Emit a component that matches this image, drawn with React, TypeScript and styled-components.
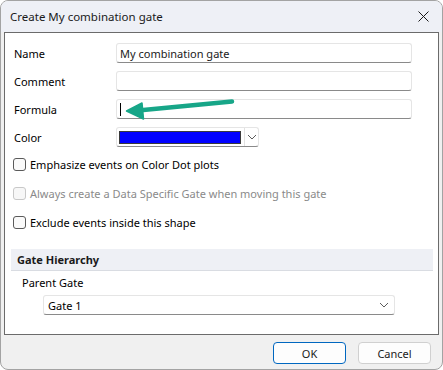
import styled, { createGlobalStyle } from 'styled-components';

const GlobalStyle = createGlobalStyle`
  html, body {
    margin: 0;
    padding: 0;
    background: #ffffff;
  }
  * {
    box-sizing: border-box;
  }
`;

const FONT = `'Noto Sans', 'Open Sans', sans-serif`;

const Chevron = () => (
  <svg width='10' height='6' viewBox='0 0 10 6'>
    <path d='M1 1 L5 5 L9 1' fill='none' stroke='#5c5c5c' strokeWidth='1' />
  </svg>
);

const App = () => {
  return (
    <>
      <GlobalStyle />
      <Window>
        <TitleBar>
          <Title>Create My combination gate</Title>
          <CloseButton aria-label='close'>
            <svg width='11' height='11' viewBox='0 0 11 11'>
              <path d='M0.5 0.5 L10.5 10.5 M10.5 0.5 L0.5 10.5' stroke='#1a1a1a' strokeWidth='1' />
            </svg>
          </CloseButton>
        </TitleBar>
        <Body>
          <Panel>
            <FormGrid>
              <Label>Name</Label>
              <TextBox>My combination gate</TextBox>
              <Label>Comment</Label>
              <TextBox />
              <Label>Formula</Label>
              <TextBox>
                <Caret />
              </TextBox>
              <Label>Color</Label>
              <ColorCombo>
                <Swatch $color='#0000ff' />
                <ComboButton>
                  <Chevron />
                </ComboButton>
              </ColorCombo>
            </FormGrid>

            <Checks>
              <CheckRow>
                <CheckBox />
                <CheckText>Emphasize events on Color Dot plots</CheckText>
              </CheckRow>
              <CheckRow $disabled>
                <CheckBox $disabled />
                <CheckText>Always create a Data Specific Gate when moving this gate</CheckText>
              </CheckRow>
              <CheckRow>
                <CheckBox />
                <CheckText>Exclude events inside this shape</CheckText>
              </CheckRow>
            </Checks>

            <SectionHeader>Gate Hierarchy</SectionHeader>
            <SubLabel>Parent Gate</SubLabel>
            <Select>
              <span>Gate 1</span>
              <Chevron />
            </Select>
          </Panel>
        </Body>
        <Footer>
          <Button $primary>OK</Button>
          <Button>Cancel</Button>
        </Footer>

        <Annotation width='150' height='40' viewBox='100 90 150 40'>
          <path d='M232 101.5 L138 110.5' stroke='#17a688' strokeWidth='4.5' strokeLinecap='round' fill='none' />
          <path d='M126.5 111 L142 103 L143.5 119 Z' fill='#17a688' stroke='#17a688' strokeWidth='1.5' strokeLinejoin='round' />
        </Annotation>
      </Window>
    </>
  );
};

export default App;

const Window = styled.div`
  position: relative;
  width: 443px;
  height: 370px;
  border: 1px solid #a3a3a3;
  border-radius: 8px;
  overflow: hidden;
  display: flex;
  flex-direction: column;
  background: #f0f0f0;
  font-family: ${FONT};
  font-size: 11px;
  color: #000;
`;

const TitleBar = styled.div`
  height: 31px;
  flex: none;
  display: flex;
  align-items: center;
  justify-content: space-between;
  background: #eef0f6;
  padding: 0 9px 0 9px;
`;

const Title = styled.div`
  font-size: 11.5px;
  color: #1a1a1a;
`;

const CloseButton = styled.div`
  width: 20px;
  height: 20px;
  display: flex;
  align-items: center;
  justify-content: center;
`;

const Body = styled.div`
  padding: 0 3px;
  flex: none;
`;

const Panel = styled.div`
  height: 303px;
  background: #ffffff;
  border: 1px solid #6b6b6b;
  padding: 10px 5px 0 0;
  display: flex;
  flex-direction: column;
`;

const FormGrid = styled.div`
  display: grid;
  grid-template-columns: 102px 296px;
  grid-auto-rows: 20px;
  row-gap: 8px;
  padding-left: 9px;
  align-items: center;
`;

const Label = styled.div`
  white-space: nowrap;
`;

const TextBox = styled.div`
  height: 20px;
  border: 1px solid #e5e5e5;
  border-bottom-color: #8a8a8a;
  border-radius: 3px;
  padding: 0 3px;
  display: flex;
  align-items: center;
  color: #1a1a1a;
  white-space: nowrap;
`;

const Caret = styled.span`
  display: block;
  width: 1px;
  height: 13px;
  background: #000;
`;

const ColorCombo = styled.div`
  width: 143px;
  height: 20px;
  border: 1px solid #e5e5e5;
  border-bottom-color: #8a8a8a;
  border-radius: 3px;
  display: flex;
  align-items: center;
  padding-left: 2px;
`;

const Swatch = styled.div<{ $color: string }>`
  width: 122px;
  height: 13px;
  background: ${(p) => p.$color};
  border: 1px solid #3a3a3a;
`;

const ComboButton = styled.div`
  margin-left: 3px;
  flex: 1;
  height: 100%;
  border-left: 1px solid #e2e2e2;
  display: flex;
  align-items: center;
  justify-content: center;
`;

const Checks = styled.div`
  display: flex;
  flex-direction: column;
  gap: 9px;
  padding-left: 8px;
  margin-top: 7px;
`;

const CheckRow = styled.div<{ $disabled?: boolean }>`
  height: 20px;
  display: flex;
  align-items: center;
  gap: 4px;
  color: ${(p) => (p.$disabled ? '#8a8a8a' : '#000')};
`;

const CheckBox = styled.div<{ $disabled?: boolean }>`
  width: 13px;
  height: 13px;
  border: 1px solid ${(p) => (p.$disabled ? '#c8c8c8' : '#5a5a5a')};
  border-radius: 3px;
  background: ${(p) => (p.$disabled ? '#f7f7f7' : '#fafafa')};
  flex: none;
`;

const CheckText = styled.span`
  white-space: nowrap;
`;

const SectionHeader = styled.div`
  margin: 17px 0 0 6px;
  height: 22px;
  background: #eef0f5;
  border-bottom: 1px solid #d9dce2;
  padding-left: 6px;
  display: flex;
  align-items: center;
  font-weight: bold;
  color: #1a1a1a;
`;

const SubLabel = styled.div`
  padding-left: 17px;
  height: 20px;
  margin-top: 1px;
  display: flex;
  align-items: center;
`;

const Select = styled.div`
  margin: 3px 0 0 38px;
  width: 352px;
  height: 20px;
  border: 1px solid #e5e5e5;
  border-bottom-color: #8a8a8a;
  border-radius: 3px;
  display: flex;
  align-items: center;
  justify-content: space-between;
  padding: 0 5px 0 4px;
`;

const Footer = styled.div`
  flex: 1;
  display: flex;
  justify-content: flex-end;
  align-items: flex-start;
  gap: 12px;
  padding: 7px 11px 0 0;
`;

const Button = styled.div<{ $primary?: boolean }>`
  width: 73px;
  height: 22px;
  border: 1px solid ${(p) => (p.$primary ? '#0067c0' : '#d0d0d0')};
  border-radius: 4px;
  background: #fdfdfd;
  display: flex;
  align-items: center;
  justify-content: center;
  color: #1a1a1a;
`;

const Annotation = styled.svg`
  position: absolute;
  left: 99px;
  top: 89px;
  pointer-events: none;
`;
